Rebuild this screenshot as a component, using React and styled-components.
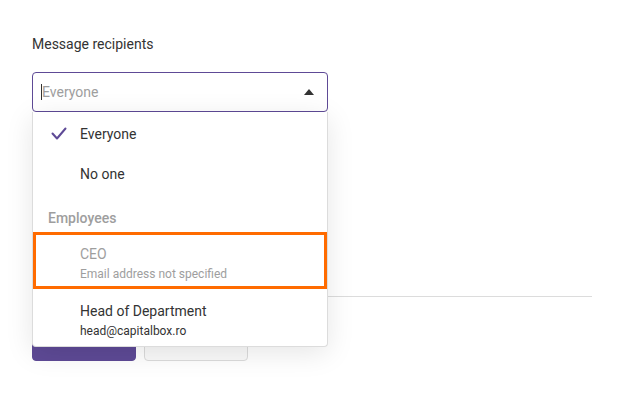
import React from "react";
import styled, { createGlobalStyle } from "styled-components";

const colors = {
  purple: "#5e4a96",
  text: "#333333",
  muted: "#9e9e9e",
  border: "#dcdcdc",
  orange: "#ff6b00",
  white: "#ffffff",
};

const GlobalStyle = createGlobalStyle`
  body {
    margin: 0;
    background: ${colors.white};
    font-family: Roboto, "Liberation Sans", sans-serif;
    color: ${colors.text};
  }
`;

const Page = styled.div`
  padding: 34px 32px;
  width: 560px;
`;

const Label = styled.label`
  display: block;
  font-size: 14px;
  line-height: 20px;
  margin-bottom: 18px;
`;

const SelectWrapper = styled.div`
  position: relative;
  width: 296px;
  z-index: 2;
`;

const SelectBox = styled.div`
  box-sizing: border-box;
  height: 40px;
  border: 1px solid ${colors.purple};
  border-radius: 4px;
  display: flex;
  align-items: center;
  justify-content: space-between;
  padding: 0 13px 0 8px;
`;

const Placeholder = styled.span`
  font-size: 14px;
  color: ${colors.muted};
  display: flex;
  align-items: center;
`;

const Cursor = styled.span`
  display: inline-block;
  width: 1px;
  height: 16px;
  background: ${colors.text};
`;

const Caret = styled.span`
  width: 0;
  height: 0;
  border-left: 5px solid transparent;
  border-right: 5px solid transparent;
  border-bottom: 6px solid #333;
`;

const Menu = styled.ul`
  position: absolute;
  top: 100%;
  left: 0;
  right: 0;
  margin: 0;
  padding: 2px 0 0;
  list-style: none;
  background: ${colors.white};
  border: 1px solid ${colors.border};
  border-top: none;
  border-radius: 0 0 4px 4px;
  box-shadow: 0 6px 28px rgba(0, 0, 0, 0.1);
`;

const Option = styled.li`
  display: flex;
  align-items: center;
  height: 40px;
  font-size: 14px;
  padding-left: 47px;
  position: relative;
`;

const Check = styled.svg`
  position: absolute;
  left: 18px;
  top: 13px;
`;

const GroupHeader = styled.li`
  font-size: 14px;
  line-height: 18px;
  color: ${colors.muted};
  font-weight: 500;
  padding: 15px 0 5px 15px;
`;

const PersonOption = styled.li`
  box-sizing: border-box;
  padding: ${(p) => (p.$highlight ? "9px 0 4px 44px" : "12px 0 7px 47px")};
  border: ${(p) => (p.$highlight ? `3px solid ${colors.orange}` : "none")};
  color: ${(p) => (p.$disabled ? colors.muted : colors.text)};
`;

const PersonName = styled.div`
  font-size: 14px;
  line-height: 20px;
`;

const PersonEmail = styled.div`
  font-size: 12px;
  line-height: 16px;
  margin-top: 2px;
`;

const Divider = styled.hr`
  margin: 184px 0 0;
  border: none;
  border-top: 1px solid ${colors.border};
`;

const Actions = styled.div`
  display: flex;
  gap: 8px;
  margin-top: 24px;
`;

const Button = styled.button`
  box-sizing: border-box;
  width: 104px;
  height: 40px;
  border-radius: 4px;
  font-family: inherit;
  font-size: 14px;
  border: 1px solid ${(p) => (p.$primary ? colors.purple : colors.border)};
  background: ${(p) => (p.$primary ? colors.purple : "#fafafa")};
  color: ${(p) => (p.$primary ? colors.white : colors.text)};
`;

const App = () => (
  <Page>
    <GlobalStyle />
    <Label>Message recipients</Label>
    <SelectWrapper>
      <SelectBox>
        <Placeholder>
          <Cursor />
          Everyone
        </Placeholder>
        <Caret />
      </SelectBox>
      <Menu>
        <Option>
          <Check width="16" height="14" viewBox="0 0 16 14">
            <polyline
              points="1.5,6.5 6,11.5 14.5,1.5"
              fill="none"
              stroke={colors.purple}
              strokeWidth="2"
              strokeLinecap="round"
              strokeLinejoin="round"
            />
          </Check>
          Everyone
        </Option>
        <Option>No one</Option>
        <GroupHeader>Employees</GroupHeader>
        <PersonOption $highlight $disabled>
          <PersonName>CEO</PersonName>
          <PersonEmail>Email address not specified</PersonEmail>
        </PersonOption>
        <PersonOption>
          <PersonName>Head of Department</PersonName>
          <PersonEmail>head@capitalbox.ro</PersonEmail>
        </PersonOption>
      </Menu>
    </SelectWrapper>
    <Divider />
    <Actions>
      <Button $primary>Save</Button>
      <Button>Cancel</Button>
    </Actions>
  </Page>
);

export default App;
